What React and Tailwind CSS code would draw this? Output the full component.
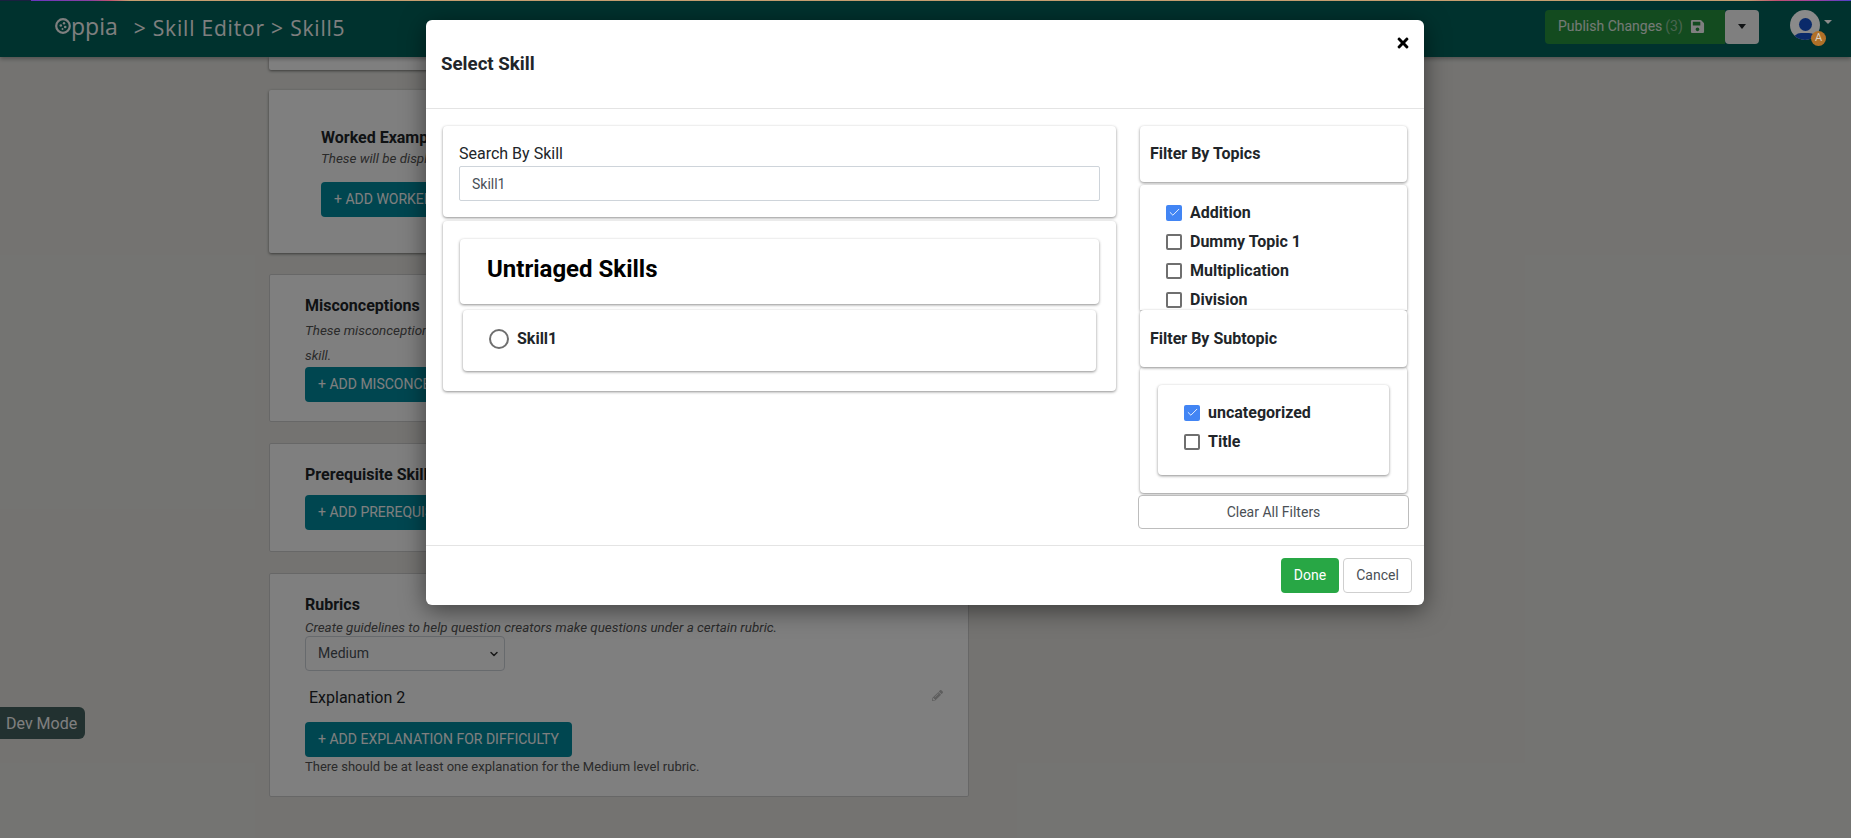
import { useState } from "react";
import { Check, ChevronDown } from "lucide-react";
import { FaPencilAlt, FaSave, FaTimes } from "react-icons/fa";

function SectionCard({ className, children }) {
	return (
		<section className={`bg-white border border-[#cfcfcf] rounded-[2px] ${className}`}>
			{children}
		</section>
	);
}

function AddButton({ children, className = "" }) {
	return (
		<button className={`block h-[35px] bg-[#008ca0] text-white text-[14px] px-[13px] rounded-[4px] whitespace-nowrap ${className}`}>
			{children}
		</button>
	);
}

function Card({ className = "", children }) {
	return <div className={`bg-white rounded-[4px] shadow-[0_1px_3px_rgba(0,0,0,0.45)] ${className}`}>{children}</div>;
}

function CheckRow({ label, checked }) {
	return (
		<div className="flex items-center h-[29px] gap-2 shrink-0">
			<span
				className={`flex items-center justify-center w-4 h-4 rounded-[2px] ${
					checked ? "bg-[#4285f4]" : "border-2 border-[#6f6f6f] bg-white"
				}`}
			>
				{checked && <Check size={13} strokeWidth={1.6} color="#fff" />}
			</span>
			<span className="text-[16px] font-bold text-[#212529]">{label}</span>
		</div>
	);
}

function SelectSkillModal() {
	const [search, setSearch] = useState("Skill1");

	return (
		<div className="absolute z-20 left-[426px] top-5 w-[998px] h-[585px] bg-white rounded-[6px] shadow-[0_5px_24px_rgba(0,0,0,0.5)] flex flex-col text-[#212529]">
			<div className="h-[89px] shrink-0 border-b border-[#e4e4e4] flex justify-between pl-[15px] pr-[13px]">
				<h4 className="text-[18.7px] font-bold mt-[33px] leading-[22px]">Select Skill</h4>
				<FaTimes size={16} color="#000" className="mt-[15px]" />
			</div>

			<div className="flex-1 flex pl-[17px] pr-[15px] pt-[17px] gap-[24px] min-h-0">
				<div className="w-[673px] shrink-0 flex flex-col gap-[4px]">
					<Card className="h-[91px] px-[16px] pt-[18px]">
						<label className="block text-[16px] leading-[20px] mb-[2px]">Search By Skill</label>
						<input
							value={search}
							onChange={(e) => setSearch(e.target.value)}
							className="w-[641px] h-[35px] border border-[#ced4da] rounded-[2px] px-3 text-[14px] text-[#495057] outline-none"
						/>
					</Card>
					<Card className="h-[170px] pl-[17px] pr-[17px] pt-[18px]">
						<Card className="h-[65px] flex items-center pl-[27px]">
							<h2 className="text-[24px] font-bold text-black -mt-[6px]">Untriaged Skills</h2>
						</Card>
						<Card className="h-[61px] mt-[6px] mx-[3px] pl-[26px] pt-[19px] flex items-start gap-[8px]">
							<span className="w-5 h-5 rounded-full border-2 border-[#6f6f6f]" />
							<span className="text-[16px] font-bold leading-[20px]">Skill1</span>
						</Card>
					</Card>
				</div>

				<div className="w-[267px] shrink-0 flex flex-col relative">
					<Card className="h-[56px] shrink-0 flex items-center pl-[10px] text-[16px] font-bold">Filter By Topics</Card>
					<Card className="h-[125px] shrink-0 mt-[3px] pl-[26px] pt-[13px] overflow-hidden rounded-b-none flex flex-col">
						<CheckRow label="Addition" checked />
						<CheckRow label="Dummy Topic 1" />
						<CheckRow label="Multiplication" />
						<CheckRow label="Division" />
					</Card>
					<Card className="h-[57px] shrink-0 flex items-center pl-[10px] pt-[1px] text-[16px] font-bold relative">Filter By Subtopic</Card>
					<Card className="h-[126px] shrink-0 pt-[18px] px-[18px]">
						<Card className="h-[90px] pl-[26px] pt-[13px]">
							<CheckRow label="uncategorized" checked />
							<CheckRow label="Title" />
						</Card>
					</Card>
					<button className="h-[34px] shrink-0 -mx-[2px] mt-[2px] border border-[#bdbdbd] rounded-[4px] bg-white text-[14px] text-[#4a4f55]">
						Clear All Filters
					</button>
				</div>
			</div>

			<div className="h-[60px] shrink-0 border-t border-[#e4e4e4] flex justify-end items-start pt-[12px] pr-[12px] gap-[4px]">
				<button className="w-[58px] h-[35px] bg-[#28a745] text-white text-[14px] rounded-[4px]">Done</button>
				<button className="w-[69px] h-[35px] border border-[#cfcfcf] bg-white text-[14px] text-[#4a4f55] rounded-[4px]">Cancel</button>
			</div>
		</div>
	);
}

export default function App() {
	return (
		<div className="relative h-[838px] overflow-hidden bg-[#e8e7e3] font-['Roboto',sans-serif] text-[#212529]">
			<header className="h-[57px] bg-[#00645c] shadow-[0_2px_4px_rgba(0,0,0,0.3)] flex items-center pl-[55px] pr-[18px] text-white relative">
				<div className="flex items-center text-white font-['Open_Sans',sans-serif] font-medium">
					<svg width="16" height="16" viewBox="0 0 16 16" fill="none" className="mt-[-6px]">
						<circle cx="8" cy="8" r="6.8" stroke="currentColor" strokeWidth="2.2" />
						<circle cx="5.8" cy="7.5" r="1.3" fill="currentColor" />
						<circle cx="9" cy="5.2" r="1.2" fill="currentColor" />
						<circle cx="10.2" cy="9" r="1.3" fill="currentColor" />
						<circle cx="7.5" cy="11" r="1" fill="currentColor" />
					</svg>
					<span className="text-[23px] leading-none mt-[-4px]">ppia</span>
					<span className="text-[21px] ml-[16px] tracking-[0.8px]">&gt; Skill Editor &gt; Skill5</span>
				</div>
				<div className="ml-auto flex items-center -mt-[4px]">
					<button className="h-[34px] w-[180px] bg-[#26963e] rounded-l-[4px] text-[14px] text-white/90 pl-[13px] flex items-center">
						Publish Changes
						<span className="text-white/50 ml-[3px]">(3)</span>
						<FaSave size={15} color="#fff" className="ml-[7px]" />
					</button>
					<button className="h-[34px] w-[34px] bg-white rounded-[4px] flex items-center justify-center">
						<span className="border-x-[4px] border-x-transparent border-t-[5px] border-t-[#212529]" />
					</button>
					<div className="relative z-10 ml-[31px] w-[43px] h-[36px] mt-[3px]">
						<div className="w-[30px] h-[30px] rounded-full bg-[#8a8a8a] overflow-hidden relative">
							<div className="absolute left-[9px] top-[8px] w-[13px] h-[13px] rounded-full bg-[#0a2a6a]" />
							<div className="absolute left-[3px] top-[23px] w-[24px] h-[16px] rounded-full bg-[#0a2a6a]" />
						</div>
						<span className="absolute left-[21px] top-[21px] w-[15px] h-[15px] rounded-full bg-[#b07028] text-[11px] flex items-center justify-center text-[#d8d0c4]">A</span>
						<span className="absolute left-[34px] top-[10px] border-x-[4px] border-x-transparent border-t-[4px] border-t-[#8a8a8a]" />
					</div>
				</div>
			</header>

			<main className="ml-[269px] w-[700px] flex flex-col gap-[21px]">
				<div className="h-[13px] -mb-[1px] bg-white rounded-b-[2px] shadow-[0_1px_3px_rgba(0,0,0,0.5)]" />

				<section className="h-[163px] bg-white rounded-[2px] shadow-[0_1px_3px_rgba(0,0,0,0.5)] pl-[52px] pt-[38px]">
					<h3 className="text-[16px] font-bold leading-5">Worked Examples</h3>
					<p className="text-[13.4px] italic text-[#555] leading-[22px]">These will be displayed to the learner</p>
					<AddButton className="mt-[12px]">+ ADD WORKED EXAMPLE</AddButton>
				</section>

				<SectionCard className="h-[148px] pl-[35px] pt-[21px]">
					<h3 className="text-[16px] font-bold leading-5">Misconceptions</h3>
					<p className="text-[13.4px] italic text-[#555] leading-[25px] w-[640px] mt-[2px]">
						These misconceptions will be used to give feedback on questions for this
						<br />
						skill.
					</p>
					<AddButton className="-mt-[1px]">+ ADD MISCONCEPTION</AddButton>
				</SectionCard>

				<SectionCard className="h-[109px] pl-[35px] pt-[21px]">
					<h3 className="text-[16px] font-bold leading-5">Prerequisite Skills</h3>
					<AddButton className="mt-[10px]">+ ADD PREREQUISITE SKILL</AddButton>
				</SectionCard>

				<SectionCard className="h-[224px] pl-[35px] pt-[21px]">
					<h3 className="text-[16px] font-bold leading-5">Rubrics</h3>
					<p className="text-[13.4px] italic text-[#555] leading-5 mt-[3px]">
						Create guidelines to help question creators make questions under a certain rubric.
					</p>
					<div className="w-[200px] h-[35px] mt-[-2px] border border-[#ced4da] rounded-[4px] px-3 flex items-center justify-between text-[14px] text-[#495057]">
						Medium
						<ChevronDown size={12} strokeWidth={3} className="-mr-[8px] text-[#333]" />
					</div>
					<div className="flex items-center justify-between mt-[15px] pl-[4px] pr-[25px] text-[16px] h-[24px]">
						Explanation 2
						<FaPencilAlt size={11} color="#bdbdbd" className="-mt-[6px]" />
					</div>
					<AddButton className="mt-[12px] w-[267px]">+ ADD EXPLANATION FOR DIFFICULTY</AddButton>
					<p className="text-[13px] text-[#555] leading-5">There should be at least one explanation for the Medium level rubric.</p>
				</SectionCard>
			</main>

			<div className="absolute left-0 top-[707px] w-[85px] h-[32px] pt-[1px] rounded-r-[6px] bg-[#446260] text-white text-[16px] flex items-center pl-[6px]">
				Dev Mode
			</div>

			<div className="absolute inset-0 bg-black/50" />
			<div className="absolute left-0 right-0 top-0 h-px bg-[linear-gradient(90deg,#1a2040_0,#1a2040_1.7%,#6a35c0_1.7%,#8a40a0_4.9%,#c05070_5.9%,#c79f70_7%,#c79f70_94.4%,#c05070_96%,#a040a0_98%,#5040c8_100%)]" />
			<SelectSkillModal />
		</div>
	);
}
